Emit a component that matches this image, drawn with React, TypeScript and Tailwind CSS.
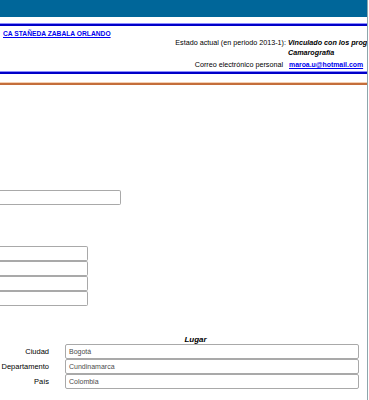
import React from 'react';

const Box: React.FC<{ className?: string; value?: string }> = ({ className = '', value = '' }) => (
  <div
    className={`h-[15px] bg-white border border-[#a9a9a9] rounded-[2px] pl-[3px] text-[7px] leading-[13px] text-[#4a4a4a] ${className}`}
  >
    {value}
  </div>
);

const App: React.FC = () => {
  const lugar = [
    { label: 'Ciudad', value: 'Bogotá' },
    { label: 'Departamento', value: 'Cundinamarca' },
    { label: 'País', value: 'Colombia' },
  ];

  return (
    <div className="w-[369px] h-[400px] overflow-hidden bg-white font-['Liberation_Sans',Arial,sans-serif] text-black">
      <div className="w-[368px] h-[400px] border-r border-[#8da6ac] overflow-hidden flex flex-col">
        {/* top band */}
        <div className="h-[17px] bg-[#006699] shrink-0" />

        {/* person header */}
        <div className="mt-[6px] h-px bg-[#8c8cff] shrink-0" />
        <div className="h-[2px] bg-[#0000c8] shrink-0" />
        <div className="pt-[3px] pl-[3px] h-[12px] text-[6.7px] leading-[9px] font-bold">
          <a href="#" className="text-[#0000ee] underline">CA STAÑEDA ZABALA ORLANDO</a>
        </div>

        <div className="grid grid-cols-[286px_1fr] gap-x-[2px] text-[7.2px] leading-[10px] whitespace-nowrap">
          <div className="text-right">Estado actual (en periodo 2013-1):</div>
          <div className="font-bold italic">Vinculado con los programas</div>
          <div />
          <div className="font-bold italic">Camarografía</div>
          <div className="text-right pr-[3px] mt-[2px]">Correo electrónico personal</div>
          <div className="mt-[2px] pl-[1px] font-bold text-[6.9px]">
            <a href="#" className="text-[#0000ee] underline">maroa.u@hotmail.com</a>
          </div>
        </div>

        <div className="mt-px h-px bg-[#8c8cff] shrink-0" />
        <div className="h-[2px] bg-[#0000c8] shrink-0" />

        <div className="mt-[8px] h-px bg-[#f4cfb2] shrink-0" />
        <div className="h-[2px] bg-[#c46e3b] shrink-0" />

        {/* form area */}
        <Box className="mt-[105px] w-[121px] border-l-0 rounded-l-none shrink-0" />

        <div className="mt-[41px] flex flex-col shrink-0">
          <Box className="w-[88px] border-l-0 rounded-l-none" />
          <Box className="w-[88px] border-l-0 rounded-l-none" />
          <Box className="w-[88px] border-l-0 rounded-l-none" />
          <Box className="w-[88px] border-l-0 rounded-l-none" />
        </div>

        <div className="mt-[29px] pl-[24px] h-[9px] text-center text-[8px] leading-[9px] font-bold italic shrink-0">
          Lugar
        </div>
        <div className="grid grid-cols-[49px_294px] gap-x-[16px] text-[7.5px] shrink-0">
          {lugar.map((r) => (
            <React.Fragment key={r.label}>
              <div className="text-right leading-[15px] whitespace-nowrap">{r.label}</div>
              <Box value={r.value} />
            </React.Fragment>
          ))}
        </div>

        <div className="mt-[11px] h-px bg-[#f7d6bb] shrink-0" />
      </div>
    </div>
  );
};

export default App;
